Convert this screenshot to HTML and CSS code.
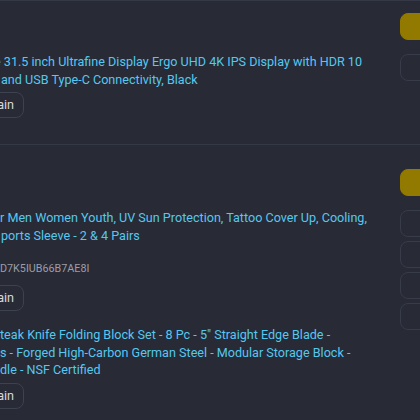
FILE: index.html
```html
<!DOCTYPE html>
<html lang="en">
<head>
<meta charset="utf-8">
<title>Your Orders</title>
<link rel="stylesheet" href="styles.css">
</head>
<body>
<div class="page">
  <section class="order first">
    <div class="items">
      <div class="item">
        <a class="title" href="#">
          <span class="ln cut-a">e 31.5 inch Ultrafine Display Ergo UHD 4K IPS Display with HDR 10</span>
          <span class="ln cut-b">and USB Type-C Connectivity, Black</span>
        </a>
        <div class="again-wrap"><button class="again">Buy it again</button></div>
      </div>
    </div>
    <div class="actions">
      <button class="act primary">Track package</button>
      <button class="act">Return or replace items</button>
    </div>
  </section>

  <section class="order second">
    <div class="items">
      <div class="item">
        <a class="title" href="#">
          <span class="ln">r Men Women Youth, UV Sun Protection, Tattoo Cover Up, Cooling,</span>
          <span class="ln cut-c">ports Sleeve - 2 &amp; 4 Pairs</span>
        </a>
        <div class="serial">D7K5IUB66B7AE8I</div>
        <div class="again-wrap"><button class="again">Buy it again</button></div>
      </div>
      <div class="item">
        <a class="title" href="#">
          <span class="ln">teak Knife Folding Block Set - 8 Pc - 5" Straight Edge Blade -</span>
          <span class="ln">s - Forged High-Carbon German Steel - Modular Storage Block -</span>
          <span class="ln">dle - NSF Certified</span>
        </a>
        <div class="again-wrap"><button class="again">Buy it again</button></div>
      </div>
    </div>
    <div class="actions">
      <button class="act primary">Track package</button>
      <button class="act">Return or replace items</button>
      <button class="act">Share gift receipt</button>
      <button class="act">Write a product review</button>
      <button class="act">Leave seller feedback</button>
    </div>
  </section>
</div>
</body>
</html>
```

FILE: styles.css
```css
html, body {
  margin: 0;
  padding: 0;
  background: #282a36;
}

body {
  width: 420px;
  height: 420px;
  overflow: hidden;
  font-family: Roboto, "Liberation Sans", sans-serif;
  font-size: 12.6px;
  line-height: 17.5px;
}

.page {
  width: 620px;
  display: flex;
  flex-direction: column;
}

.order {
  display: flex;
  border-top: 1px solid #353846;
}

.order.first {
  padding: 12px 0 26px;
}

.order.second {
  padding: 24px 0 40px;
}

.items {
  flex: 0 0 400px;
  padding-top: 40px;
  display: flex;
  flex-direction: column;
  gap: 15px;
}

.item {
  display: flex;
  flex-direction: column;
}

.title {
  display: flex;
  flex-direction: column;
  color: #55c8ef;
  text-decoration: none;
}

.ln {
  white-space: nowrap;
}

.cut-a { margin-left: -6px; }
.cut-b { margin-left: 1px; }
.cut-c { margin-left: 1px; }

.serial {
  margin-top: 17px;
  color: #9a9ea9;
  font-size: 10.75px;
  line-height: 16px;
}

.serial + .again-wrap {
  margin-top: 8px;
}

.again-wrap {
  width: 24px;
  margin-top: 4px;
  display: flex;
  justify-content: flex-end;
}

.again {
  flex: none;
  height: 26px;
  padding: 0 9px 0 12px;
  border: 1px solid #3e4150;
  border-radius: 8px;
  background: #282a36;
  color: #d8d8dc;
  font: inherit;
  white-space: nowrap;
}

.actions {
  flex: 0 0 200px;
  display: flex;
  flex-direction: column;
  gap: 4px;
}

.act {
  height: 27px;
  border: 1px solid #383b49;
  border-radius: 8px;
  background: #282a36;
  color: #d8d8dc;
  font: inherit;
}

.act.primary {
  background: #927900;
  border-color: #927900;
  margin-bottom: 10px;
}
```
